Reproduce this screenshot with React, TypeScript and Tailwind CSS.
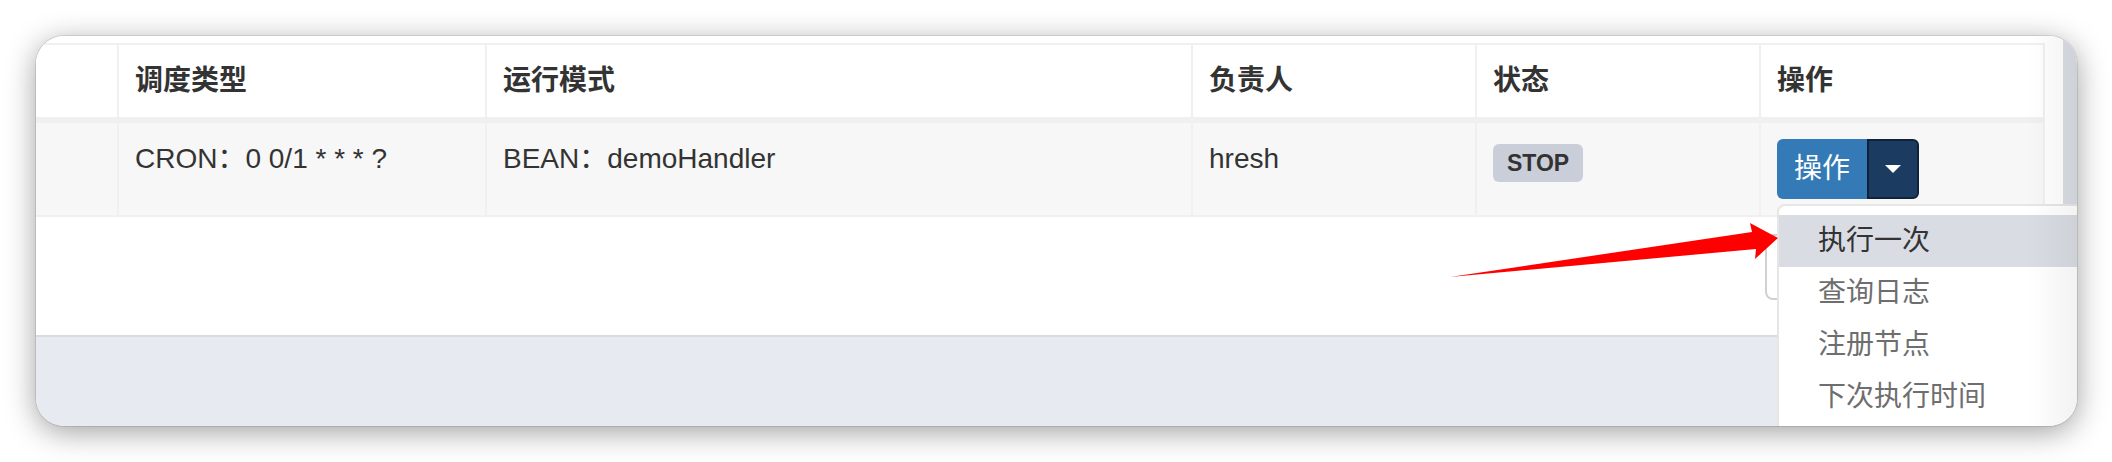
import React from "react";

const font = { fontFamily: '"Liberation Sans", "Noto Sans CJK SC", sans-serif' };

export default function App() {
  const cols = "grid grid-cols-[81px_368px_706px_284px_284px_284px]";
  const cell = "border-l-2 border-[#f0f0f0] pl-[16px] pr-[8px]";
  return (
    <div
      className="relative w-[2112px] h-[462px] bg-white overflow-hidden pt-[36px] pl-[36px] text-[#333]"
      style={font}
    >
      <div className="relative w-[2041px] h-[390px] rounded-[28px] overflow-hidden flex shadow-[0_6px_30px_rgba(0,0,0,0.38)] ring-1 ring-black/10">
        <div className="flex flex-col w-[2027px]">
          <div className="bg-white h-[299px] pt-[7px]">
            <div className="w-[2009px] border-t-2 border-r-2 border-[#f0f0f0]">
              {/* header */}
              <div className={`${cols} h-[78px] border-b-[6px] border-[#f0f0f0] text-[28px] font-bold`}>
                <div />
                <div className={`${cell} flex items-center`}>调度类型</div>
                <div className={`${cell} flex items-center`}>运行模式</div>
                <div className={`${cell} flex items-center`}>负责人</div>
                <div className={`${cell} flex items-center`}>状态</div>
                <div className={`${cell} flex items-center`}>操作</div>
              </div>
              {/* data row */}
              <div className={`${cols} h-[94px] border-b-2 border-[#f0f0f0] bg-[#f7f7f7] text-[28px] leading-[40px]`}>
                <div />
                <div className={`${cell} pt-[16px]`}>CRON：0 0/1 * * * ?</div>
                <div className={`${cell} pt-[16px]`}>BEAN：demoHandler</div>
                <div className={`${cell} pt-[16px]`}>hresh</div>
                <div className={`${cell} pt-[19px]`}>
                  <span className="inline-block h-[38px] px-[14px] leading-[38px] rounded-[6px] bg-[#caced9] text-[23px] font-bold text-[#333]">
                    STOP
                  </span>
                </div>
                <div className={`${cell} pt-[16px]`}>
                  <div className="flex h-[60px] w-[142px]">
                    <div className="w-[90px] flex items-center justify-center bg-[#337ab7] rounded-l-[6px] text-white text-[28px]">
                      操作
                    </div>
                    <div className="w-[52px] flex items-center justify-center bg-[#1b3b60] border-2 border-[#0f2239] rounded-r-[6px]">
                      <span className="block w-0 h-0 border-t-[8px] border-t-white border-x-[8px] border-x-transparent" />
                    </div>
                  </div>
                </div>
              </div>
            </div>
          </div>
          <div className="h-[2px] bg-[#d6dae1]" />
          <div className="flex-1 bg-[#e7eaf1]" />
        </div>
        <div className="w-[14px] bg-[#d9dde4]" />

        {/* element partly hidden behind menu */}
        <div className="absolute left-[1729px] top-[198px] w-[60px] h-[66px] rounded-[8px] border-2 border-[#d0d0d0] bg-white" />

        {/* dropdown menu */}
        <div className="absolute left-[1741px] top-[168px] w-[340px] h-[240px] bg-white border-2 border-[#e6e6e6] rounded-[8px] pt-[9px] text-[28px]">
          <div className="h-[52px] pl-[39px] flex items-center bg-[#d9dce3] text-[#333]">执行一次</div>
          <div className="h-[52px] pl-[39px] flex items-center text-[#6e6e6e]">查询日志</div>
          <div className="h-[52px] pl-[39px] flex items-center text-[#6e6e6e]">注册节点</div>
          <div className="h-[52px] pl-[39px] flex items-center text-[#6e6e6e]">下次执行时间</div>
        </div>

        {/* right edge shading */}
        <div className="absolute right-0 top-0 bottom-0 w-[50px] pointer-events-none bg-gradient-to-r from-transparent to-black/[0.05]" />
      </div>

      {/* red arrow */}
      <svg
        className="absolute left-0 top-0 pointer-events-none"
        width="2112"
        height="462"
        viewBox="0 0 2112 462"
      >
        <polygon
          points="1450,277 1752,232 1750,223 1778,238 1755,259 1756,249"
          fill="#ff0000"
        />
      </svg>
    </div>
  );
}
